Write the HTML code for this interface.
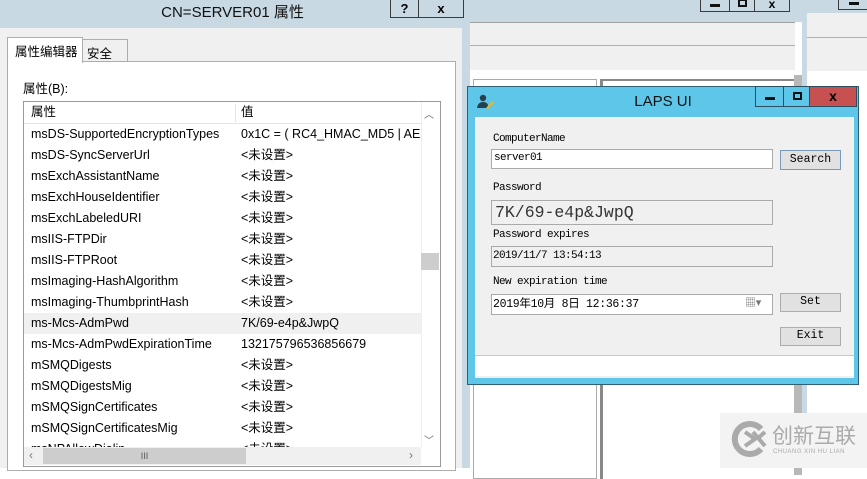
<!DOCTYPE html>
<html><head><meta charset="utf-8"><style>
*{margin:0;padding:0;box-sizing:border-box}
body{width:867px;height:468px;overflow:hidden;position:relative;background:#fff;font-family:"Liberation Sans","Noto Sans CJK SC",sans-serif;font-size:12px;color:#000}
.a{position:absolute}
.row{position:absolute;left:24px;width:397px;height:21px;line-height:21px;font-size:12.5px}
.row span{position:absolute}
.row .k{left:7px}.row .v{left:217px}
.m{font-family:"Liberation Mono","Noto Sans CJK SC",monospace;font-size:11px;letter-spacing:-0.6px}
.btn{position:absolute;background:#e1e1e1;border:1px solid #adadad;text-align:center;font-family:"Liberation Mono",monospace;font-size:11.5px}
.tb{position:absolute;border:1px solid #3c3c3c;text-align:center;font-weight:bold}
.mn{position:absolute;left:50%;top:50%;width:10px;height:3px;margin-left:-5px;background:#111}
.mx{position:absolute;left:50%;top:50%;width:9px;height:8px;margin:-5px 0 0 -4px;border:2px solid #111}
</style></head><body>
<!-- background right windows -->
<div class="a" style="left:465px;top:0;width:340px;height:468px;background:#fff"></div>
<div class="a" style="left:470px;top:0;width:335px;height:22px;background:#c8d9e3"></div>
<div class="a" style="left:470px;top:22px;width:325px;height:48px;background:#f0f0f0;border-top:1px solid #a0a0a0"></div>
<div class="a" style="left:470px;top:45px;width:325px;height:1px;background:#b0b0b0"></div>
<div class="tb" style="left:700px;top:-2px;width:30px;height:14px"><div class="mn" style="margin-top:-1px"></div></div>
<div class="tb" style="left:729px;top:-2px;width:26px;height:14px"><div class="mx" style="margin-top:-6px"></div></div>
<div class="tb" style="left:754px;top:-2px;width:36px;height:14px;font-size:12px;line-height:10px">x</div>
<div class="a" style="left:473px;top:79px;width:124px;height:400px;border:1px solid #aaa;background:#fff"></div>
<div class="a" style="left:600px;top:79px;width:195px;height:400px;border-left:3px solid #888;border-top:2px solid #888;background:#fff"></div>
<div class="a" style="left:794px;top:75px;width:8px;height:400px;background:#b8b8b8"></div>
<div class="a" style="left:802px;top:0;width:5px;height:468px;background:#c8d9e3"></div>
<div class="a" style="left:807px;top:0;width:60px;height:13px;background:#c8d9e3"></div>
<div class="a" style="left:807px;top:13px;width:60px;height:58px;background:#f0f0f0"></div>
<div class="a" style="left:807px;top:37px;width:60px;height:1px;background:#b0b0b0"></div>
<div class="tb" style="left:838px;top:-2px;width:32px;height:12px"><div class="mn" style="margin-top:-2px"></div></div>

<!-- left dialog -->
<div class="a" style="left:0;top:0;width:470px;height:468px;background:#c8d9e3"></div>
<div class="a" style="left:0;top:0;width:465px;height:28px;text-align:center;font-size:15px;line-height:26px;color:#111">CN=SERVER01 属性</div>
<div class="tb" style="left:390px;top:-1px;width:29px;height:19px;font-size:13px;line-height:17px">?</div>
<div class="tb" style="left:418px;top:-1px;width:46px;height:19px;font-size:13px;line-height:17px">x</div>
<div class="a" style="left:0;top:28px;width:462px;height:440px;background:#f0f0f0"></div>
<div class="a" style="left:7px;top:61px;width:449px;height:410px;background:#fff;border:1px solid #adadad"></div>
<div class="a" style="left:82px;top:39px;width:46px;height:23px;background:#f0f0f0;border:1px solid #adadad;font-size:12.5px;padding:3px 0 0 4px">安全</div>
<div class="a" style="left:7px;top:37px;width:76px;height:26px;background:#fff;border:1px solid #adadad;border-bottom:none;font-size:12.5px;padding:3px 0 0 7px">属性编辑器</div>
<div class="a" style="left:23px;top:78px;font-size:12.5px">属性(B):</div>
<div class="a" style="left:23px;top:101px;width:418px;height:366px;border:1px solid #9a9a9a;background:#fff"></div>
<div class="a" style="left:24px;top:102px;width:397px;height:22px;border-bottom:1px solid #e5e5e5;font-size:12.5px;line-height:21px"><span class="a" style="left:7px">属性</span><span class="a" style="left:211px;top:2px;width:1px;height:18px;background:#e5e5e5"></span><span class="a" style="left:217px">值</span></div>
<div class="row" style="top:124px"><span class="k">msDS-SupportedEncryptionTypes</span><span class="v" style="width:180px;overflow:hidden;white-space:nowrap">0x1C = ( RC4_HMAC_MD5 | AES</span></div>
<div class="row" style="top:145px"><span class="k">msDS-SyncServerUrl</span><span class="v">&lt;未设置&gt;</span></div>
<div class="row" style="top:166px"><span class="k">msExchAssistantName</span><span class="v">&lt;未设置&gt;</span></div>
<div class="row" style="top:187px"><span class="k">msExchHouseIdentifier</span><span class="v">&lt;未设置&gt;</span></div>
<div class="row" style="top:208px"><span class="k">msExchLabeledURI</span><span class="v">&lt;未设置&gt;</span></div>
<div class="row" style="top:229px"><span class="k">msIIS-FTPDir</span><span class="v">&lt;未设置&gt;</span></div>
<div class="row" style="top:250px"><span class="k">msIIS-FTPRoot</span><span class="v">&lt;未设置&gt;</span></div>
<div class="row" style="top:271px"><span class="k">msImaging-HashAlgorithm</span><span class="v">&lt;未设置&gt;</span></div>
<div class="row" style="top:292px"><span class="k">msImaging-ThumbprintHash</span><span class="v">&lt;未设置&gt;</span></div>
<div class="row" style="top:313px;background:#f0f0f0"><span class="k">ms-Mcs-AdmPwd</span><span class="v">7K/69-e4p&amp;JwpQ</span></div>
<div class="row" style="top:334px"><span class="k">ms-Mcs-AdmPwdExpirationTime</span><span class="v">132175796536856679</span></div>
<div class="row" style="top:355px"><span class="k">mSMQDigests</span><span class="v">&lt;未设置&gt;</span></div>
<div class="row" style="top:376px"><span class="k">mSMQDigestsMig</span><span class="v">&lt;未设置&gt;</span></div>
<div class="row" style="top:397px"><span class="k">mSMQSignCertificates</span><span class="v">&lt;未设置&gt;</span></div>
<div class="row" style="top:418px"><span class="k">mSMQSignCertificatesMig</span><span class="v">&lt;未设置&gt;</span></div>
<div class="row" style="top:439px;height:8px;overflow:hidden"><span class="k">msNPAllowDialin</span><span class="v">&lt;未设置&gt;</span></div>
<div class="a" style="left:421px;top:102px;width:19px;height:345px;background:#fff;border-left:1px solid #eee"></div>
<div class="a" style="left:424px;top:106px;font-size:10px;color:#666">︿</div>
<div class="a" style="left:421px;top:253px;width:18px;height:17px;background:#cdcdcd"></div>
<div class="a" style="left:424px;top:432px;font-size:10px;color:#666">﹀</div>
<div class="a" style="left:24px;top:447px;width:397px;height:18px;background:#f0f0f0"></div>
<div class="a" style="left:43px;top:448px;width:203px;height:16px;background:#cdcdcd;text-align:center;font-size:9px;line-height:16px;color:#555">III</div>
<div class="a" style="left:29px;top:448px;font-size:12px;color:#777">‹</div>
<div class="a" style="left:409px;top:448px;font-size:12px;color:#777">›</div>

<!-- LAPS UI -->
<div class="a" style="left:467px;top:86px;width:392px;height:299px;background:#5ec6e8;border:1px solid #2f5f70"></div>
<svg class="a" style="left:477px;top:94px" width="17" height="15" viewBox="0 0 17 15"><circle cx="6" cy="4" r="3.2" fill="#25404f"/><path d="M0 14 Q1 8 6 8 Q10 8 11 11 L11 14Z" fill="#25404f"/><path d="M9 14 L15 7 L17 9 L11 15Z" fill="#e8b820"/></svg>
<div class="a" style="left:467px;top:87px;width:392px;height:29px;text-align:center;font-size:15px;line-height:29px;color:#111">LAPS UI</div>
<div class="tb" style="left:755px;top:86px;width:29px;height:21px;border-color:#2a4f60"><div class="mn" style="margin-top:0"></div></div>
<div class="tb" style="left:783px;top:86px;width:27px;height:21px;border-color:#2a4f60"><div class="mx"></div></div>
<div class="tb" style="left:809px;top:86px;width:48px;height:21px;font-size:14px;line-height:18px;background:#c75050;border-color:#2a4f60">x</div>
<div class="a" style="left:475px;top:117px;width:379px;height:261px;background:#f0f0f0"></div>
<div class="a m" style="left:493px;top:133px">ComputerName</div>
<div class="a m" style="left:491px;top:149px;width:282px;height:20px;background:#fff;border:1px solid #aaa;padding:2px 0 0 2px">server01</div>
<div class="btn" style="left:780px;top:150px;width:61px;height:20px;line-height:17px;border-color:#7a9ab8">Search</div>
<div class="a m" style="left:493px;top:182px">Password</div>
<div class="a" style="left:491px;top:200px;width:282px;height:25px;border:1px solid #aaa;font-family:'Liberation Mono',monospace;font-size:16.5px;line-height:23px;padding-left:3px;color:#333">7K/69-e4p&amp;JwpQ</div>
<div class="a m" style="left:493px;top:229px">Password expires</div>
<div class="a m" style="left:491px;top:246px;width:282px;height:21px;border:1px solid #aaa;padding:3px 0 0 1px">2019/11/7 13:54:13</div>
<div class="a m" style="left:493px;top:276px">New expiration time</div>
<div class="a" style="left:491px;top:294px;width:282px;height:21px;background:#fff;border:1px solid #aaa;font-family:'Liberation Mono','Noto Sans CJK SC',monospace;font-size:11.5px;letter-spacing:-0.3px;line-height:19px;padding-left:1px">2019年10月 8日 12:36:37<span class="a" style="left:253px;top:0;color:#777;font-size:11px">▦▾</span></div>
<div class="btn" style="left:780px;top:293px;width:61px;height:19px;line-height:16px">Set</div>
<div class="btn" style="left:780px;top:327px;width:61px;height:19px;line-height:16px">Exit</div>
<div class="a" style="left:475px;top:355px;width:379px;height:21px;background:#fff;border-top:1px solid #c8c8c8"></div>

<!-- watermark -->
<div class="a" style="left:720px;top:413px;width:147px;height:55px;background:#f3f3f3"></div>
<svg class="a" style="left:731px;top:421px" width="36" height="36" viewBox="0 0 36 36"><path d="M30 8 A15 15 0 1 0 30 28" fill="none" stroke="#aaa" stroke-width="6"/><path d="M14 11 L24 18 L14 25 M22 11 L34 25 M34 11 L26 18" fill="none" stroke="#aaa" stroke-width="4"/></svg>
<div class="a" style="left:772px;top:422px;font-size:21px;color:#aaa;white-space:nowrap;font-family:'Noto Sans CJK SC',sans-serif;line-height:26px">创新互联</div>
<div class="a" style="left:773px;top:449px;font-size:6px;color:#aaa;letter-spacing:.5px;white-space:nowrap">CHUANG XIN HU LIAN</div>
</body></html>
